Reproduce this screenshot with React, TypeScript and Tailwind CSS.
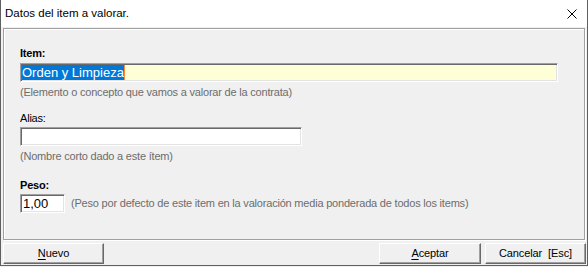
import React from "react";

const sunken =
  "border border-t-[#a0a0a0] border-l-[#a0a0a0] border-r-white border-b-white shadow-[inset_1px_1px_0_#696969,inset_-1px_-1px_0_#e3e3e3]";

const raised =
  "bg-[#f0f0f0] border border-t-white border-l-white border-r-[#696969] border-b-[#696969] shadow-[inset_-1px_-1px_0_#a0a0a0] flex items-center justify-center text-[11px] leading-[13px] tracking-[-0.1px] text-black";

export default function App() {
  return (
    <div className="w-[588px] h-[267px] bg-[#f0f0f0] font-['Liberation_Sans',Arial,sans-serif]">
      <div className="w-[588px] h-[266px] border-x border-b border-[#5f5f5f] flex flex-col">
        {/* Title bar */}
        <div className="h-[27px] bg-white flex items-center justify-between pl-[4px] pr-[10px]">
          <span className="text-[11.5px] leading-[13px] text-black">Datos del item a valorar.</span>
          <svg width="10" height="10" viewBox="0 0 10 10" className="block">
            <path d="M0.5 0.5 L9.5 9.5 M9.5 0.5 L0.5 9.5" stroke="#000" strokeWidth="1" fill="none" />
          </svg>
        </div>

        {/* Group panel */}
        <div className="mt-[1px] ml-[2px] w-[582px] h-[212px] border border-[#a0a0a0] shadow-[inset_1px_1px_0_#fff,1px_1px_0_#fff] pl-[16px] pt-[18px] flex flex-col text-[11px] leading-[13px] tracking-[-0.2px]">
          <div className="font-bold text-black">Item:</div>
          <div className={`mt-[3px] w-[538px] h-[19px] bg-[#ffffd7] ${sunken} flex items-center pl-[1px]`}>
            <span className="bg-[#0078d7] text-white text-[13px] leading-[15px] tracking-normal border-r border-r-[#ff8a3c]">
              Orden y Limpieza
            </span>
          </div>
          <div className="mt-[4px] text-[#6d6d6d]">(Elemento o concepto que vamos a valorar de la contrata)</div>

          <div className="mt-[13px] text-black">Alias:</div>
          <div className={`mt-[2px] w-[282px] h-[19px] bg-white ${sunken}`}></div>
          <div className="mt-[4px] text-[#6d6d6d]">(Nombre corto dado a este ítem)</div>

          <div className="mt-[16px] font-bold text-black">Peso:</div>
          <div className="mt-[2px] flex items-center">
            <div className={`w-[45px] h-[19px] bg-white ${sunken} flex items-center pl-[2px]`}>
              <span className="text-[13px] leading-[15px] tracking-normal text-black">1,00</span>
            </div>
            <span className="ml-[6px] text-[#6d6d6d]">
              (Peso por defecto de este item en la valoración media ponderada de todos los items)
            </span>
          </div>
        </div>

        {/* Buttons */}
        <div className="mt-[3px] flex ml-[2px] mr-[1px]">
          <button className={`w-[101px] h-[21px] ${raised}`}>
            <span><span className="underline underline-offset-2">N</span>uevo</span>
          </button>
          <div className="flex-1" />
          <button className={`w-[102px] h-[21px] ${raised}`}>
            <span><span className="underline underline-offset-2">A</span>ceptar</span>
          </button>
          <button className={`ml-[4px] w-[101px] h-[21px] ${raised}`}>
            <span>Cancelar&nbsp;&nbsp;[Esc]</span>
          </button>
        </div>
      </div>
    </div>
  );
}
